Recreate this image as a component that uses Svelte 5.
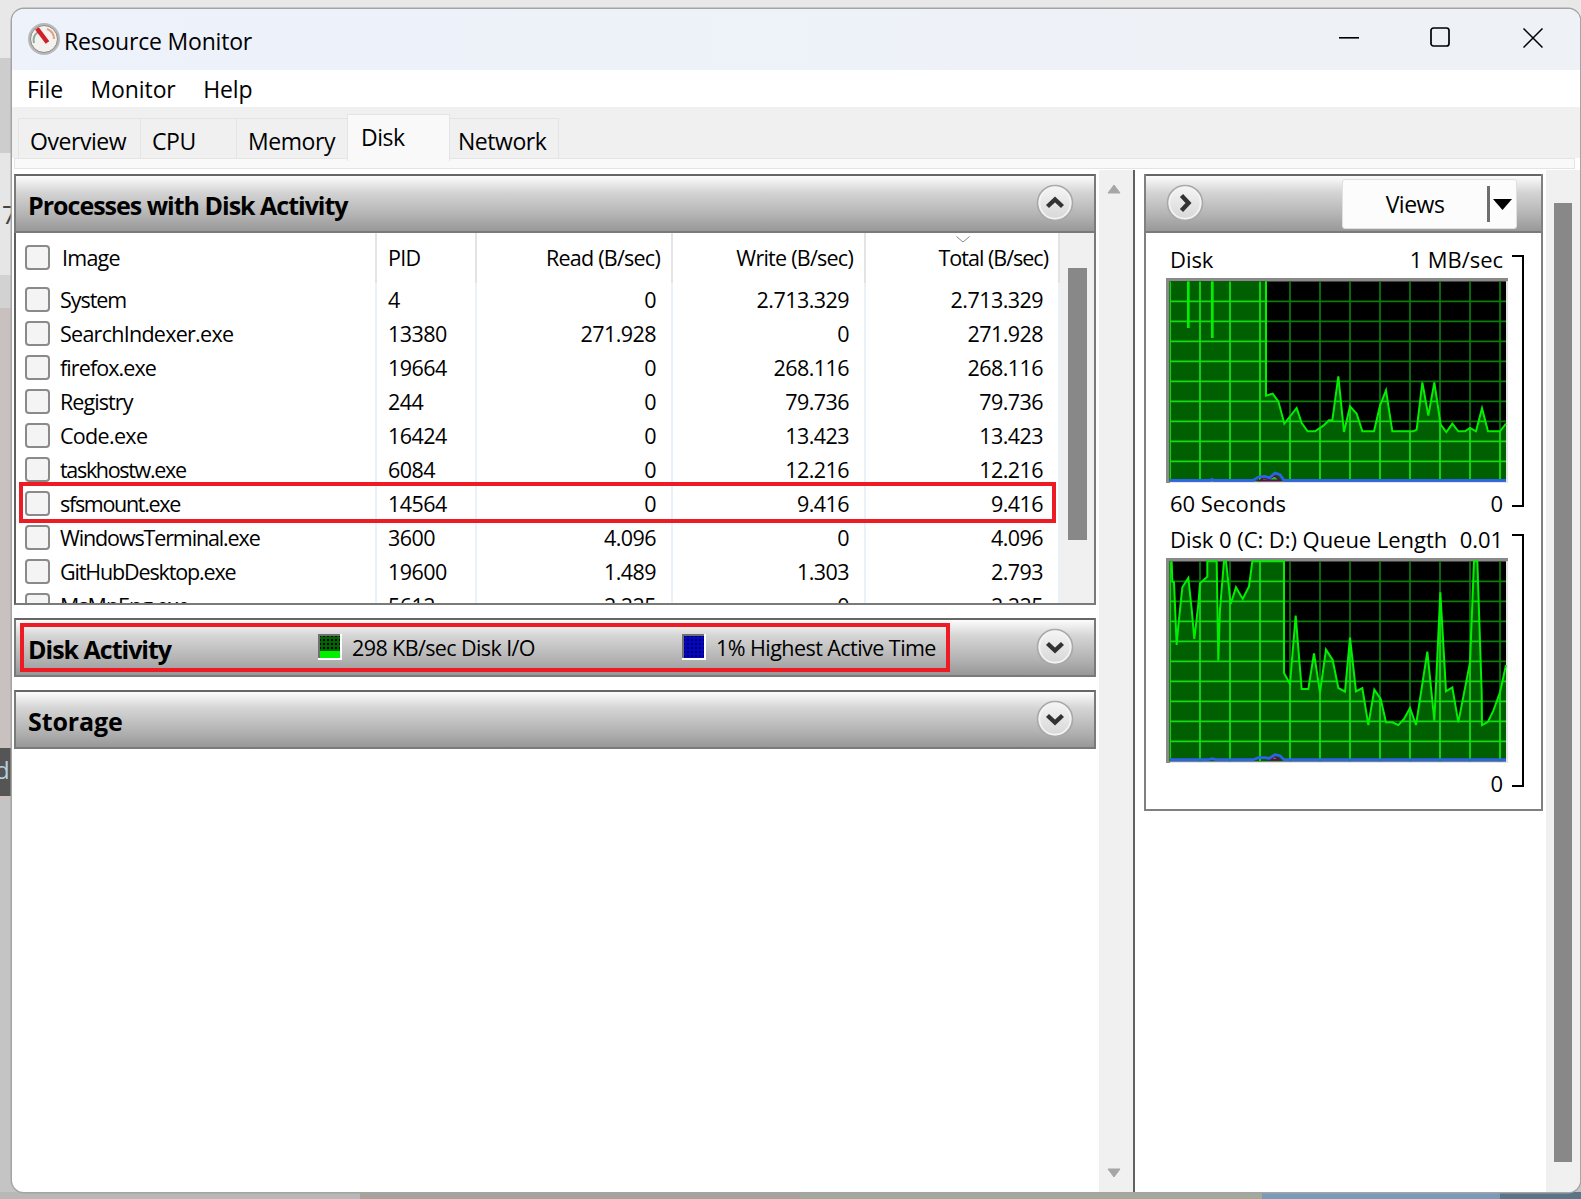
<script>
  const rows = [
    ['System', '4', '0', '2.713.329', '2.713.329', -1.05],
    ['SearchIndexer.exe', '13380', '271.928', '0', '271.928', -0.73],
    ['firefox.exe', '19664', '0', '268.116', '268.116', -0.91],
    ['Registry', '244', '0', '79.736', '79.736', -0.93],
    ['Code.exe', '16424', '0', '13.423', '13.423', -0.68],
    ['taskhostw.exe', '6084', '0', '12.216', '12.216', -1.32],
    ['sfsmount.exe', '14564', '0', '9.416', '9.416', -1.3],
    ['WindowsTerminal.exe', '3600', '4.096', '0', '4.096', -1.13],
    ['GitHubDesktop.exe', '19600', '1.489', '1.303', '2.793', -1.14],
    ['MsMpEng.exe', '5612', '2.225', '0', '2.225', -1]
  ];
  const tabs = [
    { name: 'Overview', w: 123, pad: 11 },
    { name: 'CPU', w: 97, pad: 11 },
    { name: 'Memory', w: 112, pad: 11 },
    { name: 'Disk', w: 103, pad: 13, active: true },
    { name: 'Network', w: 110, pad: 8 }
  ];
  const line1 = [[348,35],[348,378],[368,372],[385,395],[403,462],[440,415],[455,460],[473,485],[495,485],[520,468],[537,452],[547,452],[565,320],[582,487],[600,410],[620,432],[637,485],[672,485],[690,408],[708,362],[727,485],[790,485],[800,480],[817,338],[835,438],[853,338],[872,465],[889,487],[907,462],[925,485],[945,485],[960,475],[978,485],[996,416],[1014,485],[1050,485],[1068,462]];
  const line2 = [[65,97],[67,157],[72,160],[75,230],[80,348],[85,290],[97,175],[115,147],[125,240],[133,330],[145,225],[150,163],[172,143],[172,97],[200,97],[205,395],[210,240],[222,97],[228,97],[242,225],[258,175],[278,210],[297,172],[307,97],[402,97],[402,432],[420,465],[437,260],[455,480],[475,480],[492,373],[510,490],[528,362],[548,393],[565,477],[585,488],[600,326],[618,487],[637,477],[655,588],[673,482],[692,510],[708,580],[727,580],[745,588],[762,570],[780,537],[798,588],[832,368],[853,575],[871,190],[888,487],[907,475],[925,580],[960,400],[972,97],[982,97],[995,490],[996,588],[1014,578],[1030,545],[1050,490],[1068,408]];
  const blue1 = [[60,632],[180,632],[186,629],[192,632],[310,632],[325,622],[345,620],[358,625],[375,610],[390,615],[402,632],[1068,632]];
  const blue2 = [[60,692],[175,692],[186,689],[198,692],[310,692],[325,686],[345,686],[358,688],[375,677],[390,680],[402,692],[1068,692]];
  const pts = (a) => a.map((p) => p.join(',')).join(' ');
  const vGrid = [60,150,240,330,420,510,600,690,780,870,960,1050];
  const hGrid = [60,120,180,240,300,360,420,480,540];
</script>

{#snippet roundBtn(kind)}
  <svg class="round" width="38" height="38" viewBox="0 0 38 38">
    <defs>
      <linearGradient id={'rb' + kind} x1="0" y1="0" x2="0" y2="1">
        <stop offset="0" stop-color="#f6f6f6" />
        <stop offset="1" stop-color="#d6d6d6" />
      </linearGradient>
    </defs>
    <circle cx="19" cy="19" r="17.5" fill={'url(#rb' + kind + ')'} stroke="#a9a9a9" stroke-width="1.6" />
    <circle cx="19" cy="19" r="15.5" fill="none" stroke="#f4f4f4" stroke-width="1.5" />
    {#if kind === 'up'}
      <path d="M11.5 22.5 19 15.5l7.5 7" fill="none" stroke="#333" stroke-width="4.4" />
    {:else if kind === 'down'}
      <path d="M11.5 15.5 19 22.5l7.5-7" fill="none" stroke="#333" stroke-width="4.4" />
    {:else}
      <path d="M15.5 11.5 22.5 19l-7 7.5" fill="none" stroke="#333" stroke-width="4.4" />
    {/if}
  </svg>
{/snippet}

{#snippet chart(id, y0, data, fillPts, blue, spikes, bump)}
  <svg class="chart" width="342" height="205" viewBox={`48 ${y0 - 10} 1026 615`}>
    <rect x="48" y={y0 - 10} width="1026" height="615" fill="#e4e4e4" />
    <path d={`M48 ${y0 + 605}V${y0 - 10}H1074V${y0}H60V${y0 + 605}Z`} fill="#8a8a8a" />
    <rect x="60" y={y0} width="1008" height="600" fill="#000" />
    <defs>
      <clipPath id={'clip' + id}><polygon points={fillPts} /></clipPath>
    </defs>
    <g stroke="#0b7d0b" stroke-width="5">
      {#each vGrid as x}<line x1={x} x2={x} y1={y0} y2={y0 + 600} />{/each}
      {#each hGrid as y}<line x1="60" x2="1068" y1={y0 + y} y2={y0 + y} />{/each}
    </g>
    <polygon points={fillPts} fill="#005f00" />
    <g stroke="#12dc12" stroke-width="5.5" clip-path={`url(#clip${id})`}>
      {#each vGrid as x}<line x1={x} x2={x} y1={y0} y2={y0 + 600} />{/each}
      {#each hGrid as y}<line x1="60" x2="1068" y1={y0 + y} y2={y0 + y} />{/each}
    </g>
    <polyline points={data} fill="none" stroke="#00f000" stroke-width="6" />
    {#each spikes as s}
      <line x1={s[0]} x2={s[0]} y1={y0} y2={s[1]} stroke="#00f000" stroke-width="8" />
    {/each}
    <path d={bump} fill="#10d010" stroke="#600a50" stroke-width="5" />
    <polyline points={blue} fill="none" stroke="#2b62f0" stroke-width="8" />
  </svg>
{/snippet}

{#snippet legend(id, color, solidFrom)}
  <svg class="legend-icon" width="24" height="26" viewBox="0 0 24 26">
    <defs>
      <pattern id={'dots' + id} width="4" height="4" patternUnits="userSpaceOnUse" x="1" y="1">
        <rect width="2" height="2" fill="#000" />
      </pattern>
    </defs>
    <rect width="24" height="26" fill="#fff" />
    <rect width="22" height="24" fill="#707070" />
    <rect x="2" y="2" width="20" height="22" fill={color} />
    <rect x="2" y="2" width="20" height={solidFrom} fill={color === '#00f000' ? '#006400' : color} />
    <rect x="2" y="2" width="20" height={solidFrom} fill={`url(#dots${id})`} />
  </svg>
{/snippet}

<div class="desktop">
  <span class="bg-seven">7</span>
  <div class="bg-dark">d</div>
  <div class="window">
    <header class="titlebar">
      <svg class="gauge" width="34" height="34" viewBox="0 0 34 34">
        <circle cx="17" cy="17" r="16" fill="#b8b8b8" />
        <circle cx="17" cy="17" r="13.5" fill="#f4f2ee" stroke="#8a8a8a" stroke-width="1" />
        <path d="M7 21a10.500 10.500 0 0 1 4-11" fill="none" stroke="#8fae9a" stroke-width="2" />
        <path d="M20 7a10.500 10.500 0 0 1 7 10" fill="none" stroke="#e2a080" stroke-width="2" />
        <path d="M10 6.500 20.500 20.500" stroke="#d0202a" stroke-width="4.500" />
      </svg>
      <span class="app-title">Resource Monitor</span>
      <div class="winctl">
        <svg width="20" height="2" viewBox="0 0 20 2"><rect width="20" height="1.600" fill="#000" /></svg>
        <svg class="maxi" width="20" height="20" viewBox="0 0 20 20"><rect x="1" y="1" width="18" height="18" rx="2.500" fill="none" stroke="#000" stroke-width="1.700" /></svg>
        <svg class="closer" width="20" height="20" viewBox="0 0 20 20"><path d="M.5.5l19 19M19.500.5l-19 19" stroke="#000" stroke-width="1.500" /></svg>
      </div>
    </header>
    <nav class="menubar">
      <span>File</span><span>Monitor</span><span>Help</span>
    </nav>
    <div class="tabbar">
      {#each tabs as t}
        <div class="tab" class:active={t.active} style="width:{t.w}px;padding-left:{t.pad}px">{t.name}</div>
      {/each}
    </div>
    <div class="tabline"></div>

    <div class="body">
      <section class="left">
        <div class="panel">
          <div class="phead">
            <h2>Processes with Disk Activity</h2>
            {@render roundBtn('up')}
          </div>
          <div class="tablewrap">
            <div class="table">
              <div class="tr th">
                <div class="c first"><i class="check"></i><span class="imglabel">Image</span></div>
                <div class="c pid hl">PID</div>
                <div class="c num hl">Read (B/sec)</div>
                <div class="c num hl">Write (B/sec)</div>
                <div class="c num hl total tothead">
                  <svg class="sort" width="14" height="7" viewBox="0 0 14 7"><path d="M.5.500 7 6 13.500.500" fill="none" stroke="#8a8a8a" stroke-width="1" /></svg>
                  Total (B/sec)
                </div>
              </div>
              {#each rows as r}
                <div class="tr">
                  <div class="c first"><i class="check"></i><span class="proc" style="letter-spacing:{r[5]}px">{r[0]}</span></div>
                  <div class="c pid">{r[1]}</div>
                  <div class="c num">{r[2]}</div>
                  <div class="c num">{r[3]}</div>
                  <div class="c num total">{r[4]}</div>
                </div>
              {/each}
              <div class="red red-row"></div>
            </div>
            <div class="minitrack"><div class="minithumb"></div></div>
          </div>
        </div>

        <div class="panel">
          <div class="phead activity">
            <h2 class="acttitle">Disk Activity</h2>
            <div class="stat s1">{@render legend('g', '#00f000', 15)}<span>298 KB/sec Disk I/O</span></div>
            <div class="stat s2">{@render legend('b', '#0000e0', 22)}<span>1% Highest Active Time</span></div>
            {@render roundBtn('down')}
            <div class="red red-act"></div>
          </div>
        </div>

        <div class="panel">
          <div class="phead">
            <h2 class="storage">Storage</h2>
            {@render roundBtn('down')}
          </div>
        </div>
      </section>

      <div class="track arrows">
        <svg width="14" height="10" viewBox="0 0 14 10"><path d="M7 1 13 9H1Z" fill="#a6a6a6" stroke="#a6a6a6" stroke-linejoin="round" /></svg>
        <svg width="14" height="10" viewBox="0 0 14 10"><path d="M7 9 13 1H1Z" fill="#a6a6a6" stroke="#a6a6a6" stroke-linejoin="round" /></svg>
      </div>

      <section class="right">
        <div class="rpanel">
          <div class="phead rhead">
            {@render roundBtn('right')}
            <div class="views">
              <span class="vlabel">Views</span>
              <i class="vsep"></i>
              <svg width="19" height="11" viewBox="0 0 19 11"><path d="M0 0H19L9.500 11Z" fill="#000" /></svg>
            </div>
          </div>
          <div class="graphs">
            <div class="graph">
              <div class="lbl top"><span>Disk</span><span>1 MB/sec</span></div>
              {@render chart('a', 35, pts(line1), pts([[60,35],...line1,[1068,635],[60,635]]), pts(blue1), [[115,175],[187,205]], 'M330 632l12-8 16 4 16-10 16 14Z')}
              <div class="lbl bot"><span>60 Seconds</span><span>0</span></div>
              <i class="bracket b1"></i>
            </div>
            <div class="graph">
              <div class="lbl q"><span>Disk 0 (C: D:) Queue Length</span><span>0.01</span></div>
              {@render chart('b', 97, pts(line2), pts([[60,97],...line2,[1068,697],[60,697]]), pts(blue2), [], 'M360 692l14-10 14 10Z')}
              <div class="lbl last"><span></span><span>0</span></div>
              <i class="bracket b2"></i>
            </div>
          </div>
        </div>
      </section>

      <div class="track main"><div class="thumb"></div></div>
    </div>
  </div>
</div>

<style>
  :global(body) { margin: 0; }
  .desktop {
    position: relative;
    width: 1581px;
    height: 1199px;
    overflow: hidden;
    box-sizing: border-box;
    padding: 9px 1px 7px 12px;
    font-family: "Open Sans", "Noto Sans", sans-serif;
    color: #000;
    background:
      linear-gradient(90deg, #b8b8b8 0 360px, #a8a29c 360px 800px, #a3aa9c 800px 1262px, #7b9ab8 1262px 1500px, #5a7488 1500px) bottom / 100% 7px no-repeat,
      linear-gradient(#e8e8e8 0 58px, #cdcdcd 58px 153px, #e6e6e6 153px 275px, #d2d2d2 275px 308px, #c9c0c0 308px 800px, #c4c4c4 800px);
  }
  .bg-seven { position: absolute; left: 2px; top: 196px; font-size: 26px; line-height: 36px; color: #444; }
  .bg-dark {
    position: absolute; left: 0; top: 748px; width: 14px; height: 48px;
    background: #555; color: #b8d0e0; font-size: 24px; line-height: 44px; text-indent: -5px; overflow: hidden;
  }
  .window {
    position: relative;
    height: 100%;
    background: #fff;
    border-radius: 12px;
    overflow: hidden;
    box-shadow: 0 0 0 1.5px #a4a4a4;
    display: flex;
    flex-direction: column;
  }
  .titlebar {
    height: 61px;
    flex: none;
    background: linear-gradient(90deg, #edf2fb, #eef2f6);
    display: flex;
    align-items: center;
    padding-left: 15px;
    box-sizing: border-box;
  }
  .gauge { margin-top: -2px; }
  .app-title { font-size: 23px; margin-left: 3px; letter-spacing: -0.2px; margin-top: 2px; }
  .winctl {
    margin-left: auto;
    display: flex;
    align-items: center;
    padding-right: 37px;
    margin-top: -3px;
  }
  .maxi { margin-left: 71px; margin-top: -2px; }
  .closer { margin-left: 73px; }
  .menubar {
    height: 37px;
    flex: none;
    display: flex;
    align-items: center;
    padding-left: 15px;
    gap: 27.5px;
    font-size: 23px;
    letter-spacing: -0.1px;
  }
  .tabbar {
    height: 51px;
    flex: none;
    background: #f0f0f0;
    display: flex;
    align-items: flex-end;
    padding-left: 7px;
    box-sizing: border-box;
  }
  .tab {
    height: 40px;
    box-sizing: border-box;
    border: 1px solid #e4e4e4;
    border-bottom: none;
    border-left-width: 1px;
    margin-left: -1px;
    background: #f0f0f0;
    font-size: 23px;
    line-height: 44px;
    letter-spacing: -0.45px;
  }
  .tab.active {
    height: 47px;
    margin-bottom: -3px;
    background: #f9f9f9;
    line-height: 44px;
    position: relative;
    z-index: 1;
  }
  .tabline {
    height: 9px;
    flex: none;
    background: #f9f9f9;
    border: 1px solid #e4e4e4;
    margin: 0 5px 0 2px;
  }
  .body {
    flex: 1;
    min-height: 0;
    display: flex;
    margin-top: 1px;
  }
  .left {
    width: 1084px;
    flex: none;
    box-sizing: border-box;
    padding: 4px 0 0 2px;
    display: flex;
    flex-direction: column;
    gap: 13px;
    margin-right: 3px;
  }
  .phead {
    position: relative;
    height: 59px;
    box-sizing: border-box;
    border: 2px solid #7a7a7a;
    border-top-color: #666;
    background: linear-gradient(#fcfcfc, #d4d4d4 30%, #b4b4b4 70%, #989898);
    display: flex;
    align-items: center;
    padding: 0 20px 0 12px;
    justify-content: space-between;
  }
  h2 { margin: 0; font-size: 25px; font-weight: 700; letter-spacing: -1px; margin-top: 3px; }
  .storage { letter-spacing: -0.1px; }
  .round { flex: none; margin-top: -1px; margin-left: auto; }
  .tablewrap {
    height: 372px;
    box-sizing: border-box;
    border: 2px solid #7a7a7a;
    border-top: none;
    display: flex;
    overflow: hidden;
    border-left-color: #606060;
  }
  .table { position: relative; width: 1044px; flex: none; font-size: 21.500px; letter-spacing: -0.55px; }
  .tr {
    display: grid;
    grid-template-columns: 361px 100px 196px 193px 194px;
    height: 34px;
  }
  .tr.th { height: 50px; letter-spacing: -0.75px; }
  .c { display: flex; align-items: center; border-right: 2px solid #e9f1fb; box-sizing: border-box; white-space: nowrap; padding-bottom: 2px; }
  .th .hl { border-right-color: #e4e4e4; }
  .th .first { border-right-color: #e4e4e4; }
  .first { padding-left: 9px; }
  .check {
    width: 25px; height: 25px; box-sizing: border-box; flex: none;
    border: 2px solid #8a8a8a; border-radius: 4px; background: #f4f4f4;
  }
  .imglabel { margin-left: 12px; }
  .proc { margin-left: 10px; }
  .pid { padding-left: 11px; }
  .num { justify-content: flex-end; padding-right: 15px; }
  .num.total { padding-right: 15px; }
  .th .num { padding-right: 11px; }
  .th .num.tothead { padding-right: 10px; letter-spacing: -1px; }
  .total { position: relative; }
  .sort { position: absolute; left: 90px; top: 3px; }
  .minitrack { flex: 1; background: #f0f0f0; display: flex; justify-content: center; padding-top: 35px; padding-left: 1px; }
  .minithumb { width: 19px; height: 272px; background: #888; }
  .red { position: absolute; box-sizing: border-box; border: 4px solid #ed1c24; pointer-events: none; }
  .red-row { left: 3px; top: 249px; width: 1037px; height: 41px; }
  .activity { display: flex; justify-content: flex-start; }
  .acttitle { width: 290px; flex: none; margin-top: 3px; }
  .stat { display: flex; align-items: center; font-size: 21.500px; flex: none; gap: 10px; margin-top: -1px; }
  .s1 { width: 364px; letter-spacing: -0.6px; }
  .s2 { letter-spacing: -0.55px; }
  .legend-icon { flex: none; }
  .red-act { left: 4px; top: 3px; width: 930px; height: 49px; }
  .track { width: 34px; flex: none; background: #f0f0f0; }
  .arrows {
    display: flex; flex-direction: column; justify-content: space-between; align-items: center;
    padding: 14px 4px 14px 0; box-sizing: border-box; border-right: 2px solid #606060; width: 36px;
  }
  .right { flex: 1; padding: 4px 3px 0 9px; box-sizing: border-box; }
  .rpanel { border: 2px solid #808080; border-top: none; height: 637px; box-sizing: border-box; }
  .rhead { border-width: 2px 0; border-bottom-color: #7a7a7a; padding: 0 24px 0 20px; margin-top: 0; }
  .rhead .round { margin: -1px 0 0 0; }
  .views {
    width: 175px; height: 50px; box-sizing: border-box; align-self: flex-start; margin-top: 3px;
    background: #fcfcfc; border: 1px solid #e0e0e0; border-radius: 3px;
    display: flex; align-items: center; font-size: 23px; letter-spacing: -0.5px;
  }
  .vlabel { width: 144px; text-align: center; }
  .vsep { width: 3px; height: 36px; background: #6e6e6e; margin-right: 3px; }
  .graphs { font-size: 22px; letter-spacing: -0.05px; }
  .graph { position: relative; padding-left: 20px; display: flex; flex-direction: column; width: 342px; }
  .lbl { display: flex; justify-content: space-between; padding: 0 5px 0 4px; line-height: 30px; white-space: nowrap; width: 333px; }
  .top { padding-top: 11px; height: 34px; }
  .q { height: 31px; padding-bottom: 4px; align-items: center; }
  .bot { height: 40px; align-items: center; }
  .last { height: 40px; align-items: center; }
  .chart { display: block; flex: none; }
  .bracket { position: absolute; left: 366px; width: 10px; border: 2px solid #000; border-left: none; box-sizing: content-box; }
  .b1 { top: 22px; height: 248px; }
  .b2 { top: 11px; height: 249px; }
  .main { position: relative; display: flex; justify-content: center; }
  .thumb { width: 18px; height: 959px; margin-top: 33px; background: #888; }
</style>
